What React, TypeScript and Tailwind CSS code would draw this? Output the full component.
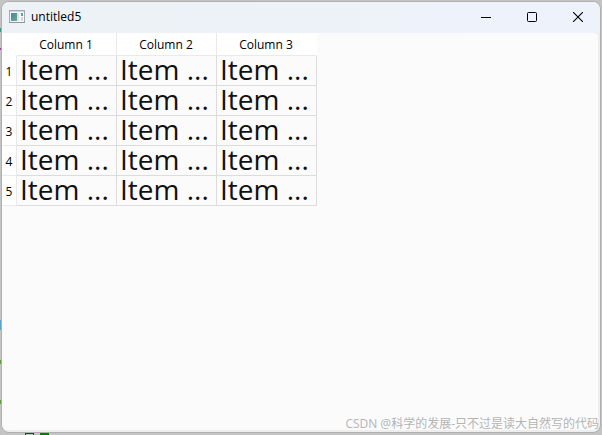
const columns = ["Column 1", "Column 2", "Column 3"]
const rows = [1, 2, 3, 4, 5]

function AppIcon() {
  return (
    <svg width="16" height="14" viewBox="0 0 16 14" aria-hidden="true">
      <defs>
        <linearGradient id="pane" x1="0" y1="0" x2="1" y2="1">
          <stop offset="0" stopColor="#4f80ae" />
          <stop offset="1" stopColor="#62b088" />
        </linearGradient>
      </defs>
      <rect x="0.5" y="0.5" width="15" height="12" fill="#f7f8f9" stroke="#a3a9af" />
      <rect x="1" y="1" width="14" height="1" fill="#cfd5da" />
      <rect x="2" y="3" width="6" height="8" fill="url(#pane)" />
      <rect x="8" y="3" width="2" height="8" fill="#dfe3e5" />
      <rect x="12" y="3" width="2" height="3" fill="#6f9c98" />
      <rect x="12" y="7" width="2" height="4" fill="#d3d7da" />
      <rect x="0" y="12" width="16" height="1" fill="#8f959b" />
    </svg>
  )
}

function TitleBar() {
  return (
    <header className="flex h-[31px] shrink-0 items-center bg-linear-to-r from-[#edf2f6] to-[#eef2fb] pb-0.5 pl-[7px]">
      <AppIcon />
      <h1 className="ml-1.5 flex-1 text-xs text-black">untitled5</h1>
      <button aria-label="Minimize" className="flex h-7 w-11 items-center justify-center">
        <svg width="10" height="10" viewBox="0 0 10 10" shapeRendering="crispEdges">
          <path d="M0 5.5h10" stroke="#000" />
        </svg>
      </button>
      <button aria-label="Maximize" className="flex h-7 w-12 items-center justify-center">
        <svg width="10" height="10" viewBox="0 0 10 10" fill="none">
          <rect x="0.5" y="0.5" width="9" height="9" rx="1" stroke="#000" />
        </svg>
      </button>
      <button aria-label="Close" className="flex h-7 w-11 items-center justify-center">
        <svg width="10" height="10" viewBox="0 0 10 10" fill="none">
          <path d="M0 0l10 10M10 0L0 10" stroke="#000" strokeWidth="1.1" />
        </svg>
      </button>
    </header>
  )
}

function ItemTable() {
  return (
    <table className="w-[315px] table-fixed border-separate border-spacing-0 text-xs text-black">
      <colgroup>
        <col className="w-[15px]" />
        {columns.map((name) => (
          <col key={name} className="w-[100px]" />
        ))}
      </colgroup>
      <thead>
        <tr>
          <td className="h-[23px] bg-white p-0" />
          {columns.map((name) => (
            <th key={name} scope="col" className="h-[23px] border-r border-b border-[#e9e9e9] bg-white p-0 pt-0.5 pr-px text-center font-normal last:border-r-white">
              {name}
            </th>
          ))}
        </tr>
      </thead>
      <tbody>
        {rows.map((row) => (
          <tr key={row}>
            <th scope="row" className="h-[30px] border-r border-b border-[#e9e9e9] bg-white p-0 pt-0.5 text-center font-normal">
              {row}
            </th>
            {columns.map((name) => (
              <td key={name} className="h-[30px] border-r border-b border-[#dcdcdc] p-0 pb-0.5 pl-[3px] text-[28px] leading-[27px] whitespace-nowrap text-[#111]">
                Item ...
              </td>
            ))}
          </tr>
        ))}
      </tbody>
    </table>
  )
}

export default function App() {
  return (
    <div className="relative flex min-h-screen flex-col bg-[#c4c4c4] pt-px pr-px pb-0.5 pl-px font-['Open_Sans','Noto_Sans_CJK_SC',sans-serif]">
      {/* bits of the window behind, showing past the left and bottom edges */}
      <span className="absolute top-7 left-0 h-1 w-px bg-[#3c9a7a]" />
      <span className="absolute top-12 left-0 h-0.5 w-px bg-[#9a3ca0]" />
      <span className="absolute top-[320px] left-0 h-2.5 w-px bg-[#5fa3c4]" />
      <span className="absolute top-[360px] left-0 h-1 w-px bg-[#5f9a3c]" />
      <span className="absolute top-[400px] left-0 h-1 w-px bg-[#5f9a3c]" />
      <span className="absolute bottom-0 left-[25px] h-0.5 w-[9px] border border-b-0 border-[#14521c]" />
      <span className="absolute bottom-0 left-10 h-0.5 w-[9px] bg-[#087a08]" />

      <div className="flex flex-1 flex-col overflow-hidden rounded-lg border border-[#b0b0b0] bg-[#eeeeee]">
        <TitleBar />
        <main className="mr-0.5 mb-0.5 flex-1 rounded-tr-sm rounded-b-md bg-[#fbfbfb]">
          <ItemTable />
        </main>
      </div>

      <p className="absolute right-[3px] bottom-[3px] text-xs leading-4 whitespace-nowrap text-[#b4b4b4]">
        CSDN @科学的发展-只不过是读大自然写的代码
      </p>
    </div>
  )
}
